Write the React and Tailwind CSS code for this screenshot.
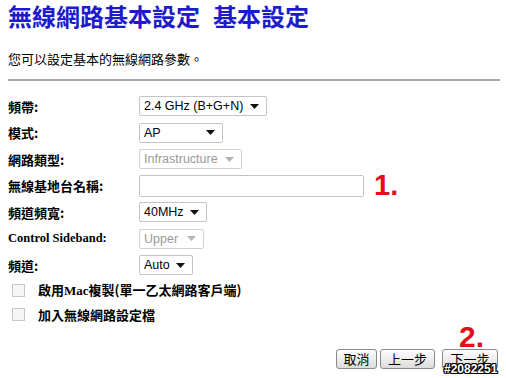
import React from "react";

const cjk = { fontFamily: '"Noto Sans CJK TC", "Liberation Sans", sans-serif' };

const Arrow = ({ disabled }) => (
  <svg width="9" height="5" viewBox="0 0 9 5" className="shrink-0">
    <path d="M0 0h9L4.5 5z" fill={disabled ? "#b4b4b4" : "#111"} />
  </svg>
);

const FakeSelect = ({ value, width, disabled }) => (
  <div
    className={`flex h-[20px] items-center justify-between rounded-[2px] border bg-white pl-[4px] pr-[7px] text-[12.5px] leading-none ${
      disabled ? "border-[#d0d0d0] text-[#9a9a9a]" : "border-[#c4c4c4] text-black"
    }`}
    style={{ width, fontFamily: '"Liberation Sans", Arial, sans-serif' }}
  >
    <span>{value}</span>
    <Arrow disabled={disabled} />
  </div>
);

const Row = ({ label, serif, children }) => (
  <div className="flex h-[26.5px] items-center">
    <div
      className="w-[131px] shrink-0 text-[13px] font-bold text-black"
      style={
        serif
          ? { fontFamily: '"Liberation Serif", "Times New Roman", serif', fontSize: 12.5 }
          : cjk
      }
    >
      {label}
    </div>
    {children}
  </div>
);

const Check = ({ children }) => (
  <div className="flex h-[24px] items-center">
    <div className="ml-[4px] h-[13px] w-[13px] border border-[#c8c8c8] bg-[#f6f6f6]" />
    <div className="ml-[13px] text-[13px] font-bold text-black" style={cjk}>
      {children}
    </div>
  </div>
);

const Btn = ({ children, className = "" }) => (
  <button
    className={`flex h-[20px] items-center justify-center rounded-[3px] border border-[#8a8a8a] bg-gradient-to-b from-white to-[#dcdcdc] text-[13px] leading-none text-black ${className}`}
    style={cjk}
  >
    {children}
  </button>
);

export default function App() {
  return (
    <div className="relative h-[378px] w-[506px] overflow-hidden bg-white px-[8px]">
      <h1 className="text-[24px] font-bold leading-[32px] text-[#1c1ccc]" style={cjk}>
        無線網路基本設定<span className="ml-[13px]">基本設定</span>
      </h1>
      <p className="mt-[19px] text-[13px] leading-[16px] text-black" style={cjk}>
        您可以設定基本的無線網路參數。
      </p>
      <div className="mt-[12px] h-[2px] w-[492px] bg-[#a8a8a8]" />

      <div className="mt-[12px]">
        <Row label="頻帶:">
          <FakeSelect value="2.4 GHz (B+G+N)" width={128} />
        </Row>
        <Row label="模式:">
          <FakeSelect value="AP" width={84} />
        </Row>
        <Row label="網路類型:">
          <FakeSelect value="Infrastructure" width={103} disabled />
        </Row>
        <Row label="無線基地台名稱:">
          <div className="h-[22px] w-[225px] rounded-[2px] border border-[#c4c4c4] bg-white" />
          <span
            className="ml-[10px] text-[29px] font-bold leading-none text-[#e0101c]"
            style={{ fontFamily: '"Liberation Sans", Arial, sans-serif' }}
          >
            1.
          </span>
        </Row>
        <Row label="頻道頻寬:">
          <FakeSelect value="40MHz" width={68} />
        </Row>
        <Row label="Control Sideband:" serif>
          <FakeSelect value="Upper" width={65} disabled />
        </Row>
        <Row label="頻道:">
          <FakeSelect value="Auto" width={54} />
        </Row>
      </div>

      <div>
        <Check>
          啟用
          <span style={{ fontFamily: '"Liberation Serif", serif' }}>Mac</span>
          複製(單一乙太網路客戶端)
        </Check>
        <Check>加入無線網路設定檔</Check>
      </div>

      <div className="mt-[22px] flex justify-end gap-[3px]">
        <Btn className="w-[41px]">取消</Btn>
        <Btn className="w-[55px]">上一步</Btn>
        <Btn className="ml-[4px] w-[56px]">下一步</Btn>
      </div>

      <span
        className="absolute left-[459px] top-[322px] text-[30px] font-bold leading-none text-[#e0101c]"
        style={{ fontFamily: '"Liberation Sans", Arial, sans-serif' }}
      >
        2.
      </span>
      <span
        className="absolute left-[444px] top-[363px] text-[12px] font-bold leading-none text-white"
        style={{
          fontFamily: '"Liberation Sans", Arial, sans-serif',
          textShadow:
            "1px 0 0 #000, -1px 0 0 #000, 0 1px 0 #000, 0 -1px 0 #000, 1px 1px 0 #000, -1px -1px 0 #000, 1px -1px 0 #000, -1px 1px 0 #000",
        }}
      >
        #2082251
      </span>
    </div>
  );
}
